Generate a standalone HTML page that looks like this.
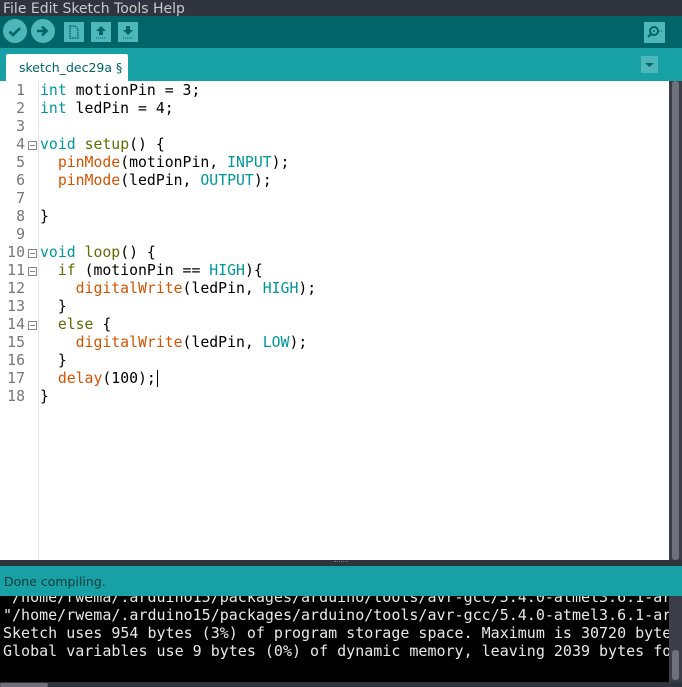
<!DOCTYPE html>
<html><head><meta charset="utf-8"><style>
*{margin:0;padding:0;box-sizing:border-box}
body{width:682px;height:687px;overflow:hidden;background:#2f333c;position:relative;font-family:"DejaVu Sans",sans-serif}
.abs{position:absolute}
#menu{left:0;top:0;width:682px;height:16px;background:#30343e;color:#c9cbcf;font-size:14px;line-height:18px;padding-left:3px;white-space:pre;overflow:hidden}
#tool{left:0;top:16px;width:682px;height:32px;background:#006468}
.circ{width:24px;height:24px;border-radius:12px;background:#4db7bb;top:3px}
.sq{width:20px;height:20px;background:#4db7bb;top:6px}
#tabs{left:0;top:48px;width:682px;height:33px;background:#17a1a5}
#tab{left:6px;top:6px;width:122px;height:27px;background:#fff;color:#006468;font-size:12.5px;line-height:27px;padding-left:13px;border-radius:2px 2px 0 0;white-space:nowrap;overflow:hidden}
#ed{left:0;top:81px;width:669px;height:479px;background:#fff}
#gut{left:38px;top:0;width:1px;height:479px;background:#e6e6e6}
.code{font-family:"DejaVu Sans Mono",monospace;font-size:14.8px;line-height:18px;white-space:pre;color:#000}
#nums{left:0;top:1px;width:25px;text-align:right;color:#777}
#src{left:40px;top:1px}
.k{color:#00979c}.o{color:#5e6d03}.f{color:#d35400}
.fold{width:9px;height:9px;border:1px solid #888;left:28px}
.fold:after{content:"";position:absolute;left:1px;top:3px;width:5px;height:1px;background:#888}
#vs{left:669px;top:81px;width:13px;height:479px;background:#3b3e46}
#st{left:0;top:566px;width:682px;height:30px;background:#17a1a5;color:#0d3b3d;font-size:12.5px;line-height:31px;padding-left:4px}
#con{left:0;top:596px;width:669px;height:86px;background:#000;overflow:hidden}
#con .code{color:#e8e8e8;font-size:15px;line-height:18px;position:absolute;left:3px;top:-8px}
#cs{left:669px;top:596px;width:13px;height:86px;background:#3b3e46}
</style></head><body>
<div id="menu" class="abs">File Edit Sketch Tools Help</div>
<div id="tool" class="abs">
 <div class="abs circ" style="left:3px"><svg width="24" height="24"><path d="M6.5 12.5l3.5 3.5 7-7" stroke="#006468" stroke-width="2.6" fill="none"/></svg></div>
 <div class="abs circ" style="left:31px"><svg width="24" height="24"><path d="M6 12h9M11 7.5l4.5 4.5-4.5 4.5" stroke="#006468" stroke-width="2.6" fill="none"/></svg></div>
 <div class="abs sq" style="left:64px"><svg width="20" height="20"><path d="M6 4h5l3 3v9H6z" fill="none" stroke="#006468" stroke-width="1.5" stroke-dasharray="1.5 1"/></svg></div>
 <div class="abs sq" style="left:91px"><svg width="20" height="20"><path d="M10 4l-5 5h3v4h4V9h3z" fill="#006468"/><path d="M5 16h10" stroke="#006468" stroke-dasharray="1 1"/></svg></div>
 <div class="abs sq" style="left:118px"><svg width="20" height="20"><path d="M10 13l-5-5h3V4h4v4h3z" fill="#006468"/><path d="M5 16h10" stroke="#006468" stroke-dasharray="1 1"/></svg></div>
 <div class="abs" style="left:644px;top:6px;width:21px;height:21px;background:#4db7bb"><svg width="21" height="21"><circle cx="10" cy="9" r="4" fill="none" stroke="#006468" stroke-width="2"/><circle cx="10" cy="9" r="1" fill="#006468"/><path d="M7 12l-3 3" stroke="#006468" stroke-width="2"/><path d="M15 9h3" stroke="#006468" stroke-dasharray="1 1"/></svg></div>
</div>
<div id="tabs" class="abs"><div id="tab" class="abs">sketch_dec29a §</div>
 <div class="abs" style="left:641px;top:8px;width:17px;height:17px;background:#4db7bb"><svg width="17" height="17"><path d="M4 7h9l-4.5 4z" fill="#006468"/></svg></div></div>
<div id="ed" class="abs">
 <div id="gut" class="abs"></div>
 <div id="nums" class="abs code">1
2
3
4
5
6
7
8
9
10
11
12
13
14
15
16
17
18</div>
 <div class="abs fold" style="top:60px"></div>
 <div class="abs fold" style="top:168px"></div>
 <div class="abs fold" style="top:186px"></div>
 <div class="abs fold" style="top:240px"></div>
 <div id="src" class="abs code"><span class="k">int</span> motionPin = 3;
<span class="k">int</span> ledPin = 4;

<span class="k">void</span> <span class="o">setup</span>() {
  <span class="f">pinMode</span>(motionPin, <span class="k">INPUT</span>);
  <span class="f">pinMode</span>(ledPin, <span class="k">OUTPUT</span>);

}

<span class="k">void</span> <span class="o">loop</span>() {
  <span class="o">if</span> (motionPin == <span class="k">HIGH</span>){
    <span class="f">digitalWrite</span>(ledPin, <span class="k">HIGH</span>);
  }
  <span class="o">else</span> {
    <span class="f">digitalWrite</span>(ledPin, <span class="k">LOW</span>);
  }
  <span class="f">delay</span>(100);<span style="border-left:1.5px solid #000;margin-left:1px"></span>
}</div>
</div>
<div id="vs" class="abs"><div class="abs" style="left:3px;top:0;width:7px;height:479px;background:#6e717a;border-radius:3px"></div></div>
<div class="abs" style="left:334px;top:561px;width:14px;height:3px;border-top:1px dotted #777"></div>
<div id="st" class="abs">Done compiling.</div>
<div id="con" class="abs"><div class="code">"/home/rwema/.arduino15/packages/arduino/tools/avr-gcc/5.4.0-atmel3.6.1-ar
"/home/rwema/.arduino15/packages/arduino/tools/avr-gcc/5.4.0-atmel3.6.1-ar
Sketch uses 954 bytes (3%) of program storage space. Maximum is 30720 byte
Global variables use 9 bytes (0%) of dynamic memory, leaving 2039 bytes fo</div></div>
<div id="cs" class="abs"><div class="abs" style="left:3px;top:54px;width:7px;height:30px;background:#6e717a;border-radius:3px"></div></div>
<div class="abs" style="left:0;top:683px;width:48px;height:4px;background:#6e717a;border-radius:2px"></div>
</body></html>
